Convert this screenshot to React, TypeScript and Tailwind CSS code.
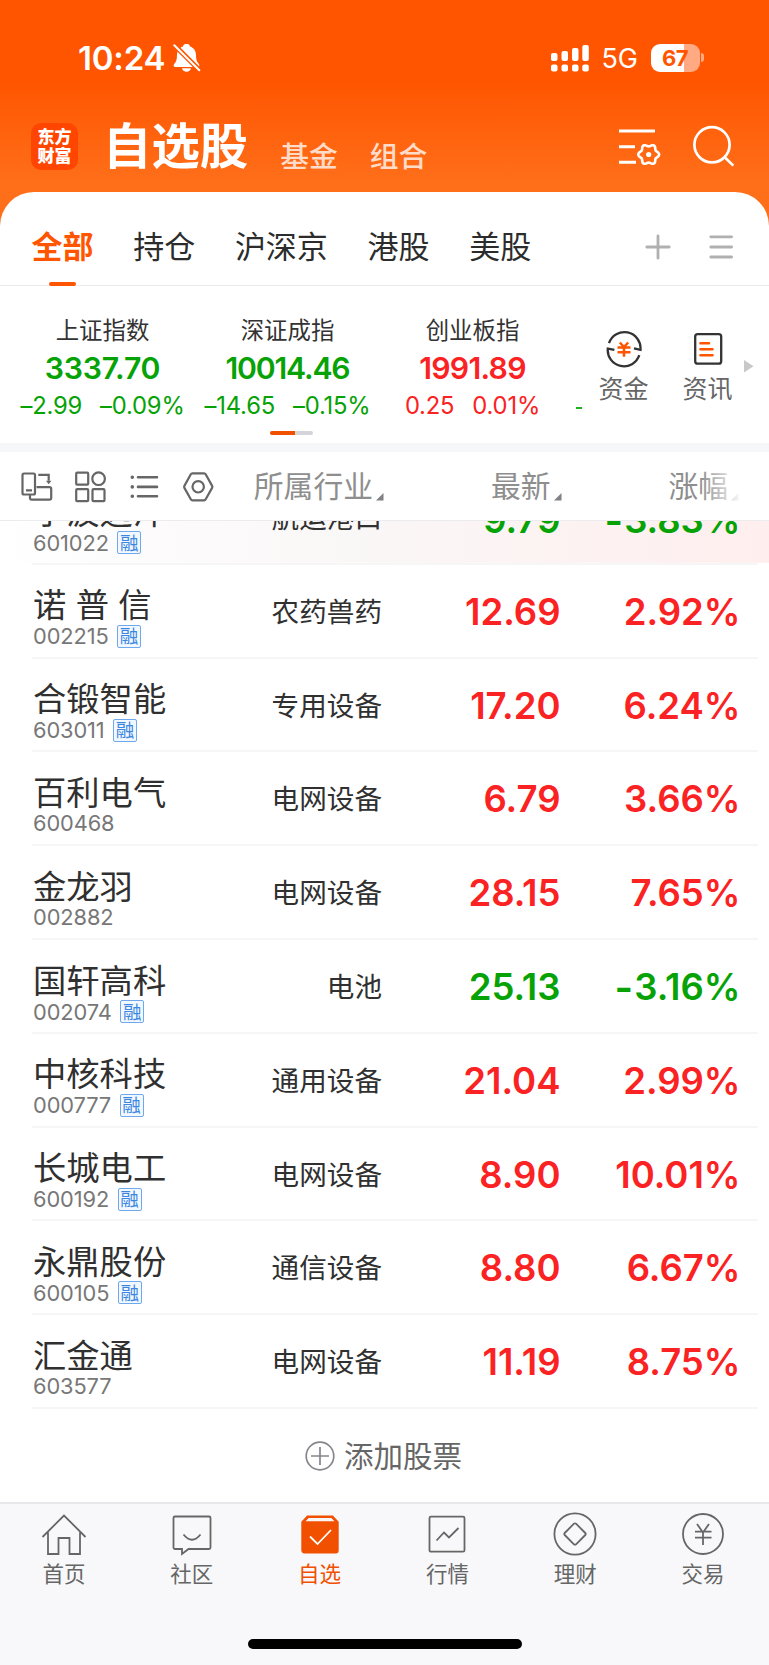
import React from 'react'
import { clsx } from 'clsx'

type Stock = {
  name: string
  code: string
  margin?: boolean
  industry: string
  price: string
  change: string
}

const stocks: Stock[] = [
  { name: '宁波远洋', code: '601022', margin: true, industry: '航运港口', price: '9.79', change: '-3.83%' },
  { name: '诺 普 信', code: '002215', margin: true, industry: '农药兽药', price: '12.69', change: '2.92%' },
  { name: '合锻智能', code: '603011', margin: true, industry: '专用设备', price: '17.20', change: '6.24%' },
  { name: '百利电气', code: '600468', industry: '电网设备', price: '6.79', change: '3.66%' },
  { name: '金龙羽', code: '002882', industry: '电网设备', price: '28.15', change: '7.65%' },
  { name: '国轩高科', code: '002074', margin: true, industry: '电池', price: '25.13', change: '-3.16%' },
  { name: '中核科技', code: '000777', margin: true, industry: '通用设备', price: '21.04', change: '2.99%' },
  { name: '长城电工', code: '600192', margin: true, industry: '电网设备', price: '8.90', change: '10.01%' },
  { name: '永鼎股份', code: '600105', margin: true, industry: '通信设备', price: '8.80', change: '6.67%' },
  { name: '汇金通', code: '603577', industry: '电网设备', price: '11.19', change: '8.75%' },
]

const indices = [
  { name: '上证指数', value: '3337.70', diff: '–2.99', pct: '–0.09%', spacing: 'tracking-[-0.2px]' },
  { name: '深证成指', value: '10014.46', diff: '–14.65', pct: '–0.15%', spacing: 'tracking-[-1.2px]' },
  { name: '创业板指', value: '1991.89', diff: '0.25', pct: '0.01%', up: true, spacing: 'tracking-[-0.7px]' },
]

// six-lobed outline of the small settings gear
const gearPath = (cx: number, cy: number) =>
  Array.from({ length: 72 }, (_, i) => {
    const a = (i / 72) * Math.PI * 2
    const r = 9.2 + 1.2 * Math.cos(6 * a)
    return `${i ? 'L' : 'M'}${(cx + r * Math.cos(a)).toFixed(2)} ${(cy + r * Math.sin(a)).toFixed(2)}`
  }).join('') + 'Z'

const StatusBar = () => {
  return (
    <div className="flex h-[115px] items-center pl-[78px] pr-[65px] text-white">
      <span className="text-[33px] leading-[40px] font-semibold tracking-[-0.2px]">10:24</span>
      <svg className="ml-[8px]" width="28" height="30" viewBox="173 43 28 30" fill="#fff">
        <path d="M186.500 43.800c-1.900 0-3.200 1.200-3.500 2.600-4.200 1.400-6 4.800-6 8.700 0 4.700-.9 6.800-2.600 8.700-1.400 1.600-.8 3.300.9 3.300h22.400c1.700 0 2.300-1.700.9-3.300-1.700-1.900-2.600-4-2.600-8.700 0-3.900-1.800-7.300-6-8.700-.3-1.400-1.600-2.600-3.500-2.600z" />
        <path d="M182 68.200h9c-.4 2.200-2.300 3.600-4.500 3.600s-4.100-1.400-4.500-3.600z" />
        <path d="M173.500 44.200l26.500 26.500" stroke="#ff5500" strokeWidth="5" />
        <path d="M174.300 45.300l25 25" stroke="#fff" strokeWidth="2" strokeLinecap="round" />
      </svg>
      <div className="ml-auto flex items-center">
        <svg width="40" height="28" viewBox="550 43 40 28" fill="#fff">
          <rect x="551" y="52" width="6.500" height="8" rx="2" />
          <rect x="561.500" y="50" width="6.500" height="10" rx="2" />
          <rect x="572" y="47" width="6.500" height="13" rx="2" />
          <rect x="582.300" y="44" width="6.500" height="16" rx="2" />
          <rect x="551" y="63.500" width="6.500" height="7" rx="2" />
          <rect x="561.500" y="63.500" width="6.500" height="7" rx="2" />
          <rect x="572" y="63.500" width="6.500" height="7" rx="2" />
          <rect x="582.300" y="63.500" width="6.500" height="7" rx="2" />
        </svg>
        <span className="ml-[12px] mt-[2px] text-[27px] leading-[32px] tracking-[-0.3px]">5G</span>
        <div className="ml-[13px] flex items-center">
          <div className="flex h-[28px] w-[49px] items-center justify-center rounded-[9px] bg-[linear-gradient(90deg,#fff_67%,#ffaa82_67%)]">
            <span className="text-[22px] leading-[28px] font-bold tracking-[-0.5px] text-[#ff5500]">67</span>
          </div>
          <div className="ml-[1.500px] h-[9px] w-[3px] rounded-r-full bg-[#ffaa82]" />
        </div>
      </div>
    </div>
  )
}

const Header = () => {
  return (
    <div className="flex h-[77px] items-start pl-[31px] text-white">
      <div className="mt-[8px] flex h-[47px] w-[47px] flex-col items-center justify-center rounded-[10px] bg-[#ff4500] text-[17px] leading-[19px] font-black">
        <span>东方</span>
        <span>财富</span>
      </div>
      <h1 className="ml-[25px] mt-[1px] text-[48.400px] leading-[62px] font-bold">自选股</h1>
      <span className="ml-[32px] mt-[21px] text-[28.800px] leading-[42px] font-medium text-[#ffdcc9]">基金</span>
      <span className="ml-[32px] mt-[21px] text-[28.800px] leading-[42px] font-medium text-[#ffdcc9]">组合</span>
      <svg className="ml-auto mt-[11px]" width="44" height="42" viewBox="618 126 44 42" fill="none" stroke="#fff" strokeWidth="3">
        <path d="M619 131h36M619 146.700h16M619 162.300h17" />
        <path d={gearPath(648.7, 154.5)} strokeWidth="2.600" />
        <circle cx="648.700" cy="154.500" r="2.600" fill="#fff" stroke="none" />
      </svg>
      <svg className="ml-[31px] mr-[33px] mt-[9px]" width="43" height="44" viewBox="693 124 43 44" fill="none" stroke="#fff" strokeWidth="2.700">
        <circle cx="712" cy="144.800" r="17.600" />
        <path d="M724.500 157l8.800 8.600" />
      </svg>
    </div>
  )
}

const Tabs = () => {
  return (
    <div className="flex h-[94px] items-center gap-[39.700px] border-b border-[#ececee] pl-[31.500px] text-[31px] leading-[94px] text-[#2c2c2c]">
      <div className="relative mt-[17px] font-bold text-[#ff5500]">
        全部
        <div className="absolute bottom-[8.500px] left-[17.500px] h-[4px] w-[27px] rounded-[2px] bg-[#ff5500]" />
      </div>
      <span className="mt-[17px]">持仓</span>
      <span className="mt-[17px]">沪深京</span>
      <span className="mt-[17px]">港股</span>
      <span className="mt-[17px]">美股</span>
      <div className="ml-auto mt-[16px] mr-[35px] flex items-center gap-[37px]">
        <svg width="26" height="26" viewBox="0 0 26 26" stroke="#b0b0b0" strokeWidth="2.800" strokeLinecap="round">
          <path d="M13 1.800v22.400M1.800 13h22.400" />
        </svg>
        <svg width="26" height="26" viewBox="0 0 26 26" stroke="#b0b0b0" strokeWidth="2.800" strokeLinecap="round">
          <path d="M2.800 2.800h20.800M2.800 13h20.800M2.800 23h20.800" />
        </svg>
      </div>
    </div>
  )
}

const IndexStrip = () => {
  return (
    <div className="flex h-[156.500px] pl-[10px]">
      <div className="flex flex-col">
        <div className="flex">
          {indices.map((item) => (
            <div
              key={item.name}
              className={clsx('flex h-[145px] w-[185px] flex-col items-center pt-[29px] whitespace-nowrap', item.up ? 'text-[#fa2222]' : 'text-[#06a206]')}
            >
              <span className="text-[23.400px] leading-[32px] text-[#333]">{item.name}</span>
              <span className={clsx('mt-[1px] text-[30.200px] leading-[40px] font-semibold', item.spacing)}>{item.value}</span>
              <div className="mt-[2px] flex gap-[18px] text-[23.800px] leading-[32px] tracking-[-0.2px]">
                <span>{item.diff}</span>
                <span>{item.pct}</span>
              </div>
            </div>
          ))}
          <div className="flex w-[14px] justify-end pt-[120px]">
            <div className="mt-[1px] mr-[-3px] h-[2px] w-[6px] bg-[#1fb01f]" />
          </div>
        </div>
        <div className="ml-[260px] flex h-[4px] w-[43px] overflow-hidden rounded-[2px] bg-[#d3d5da]">
          <div className="w-[25px] bg-[#f05000]" />
        </div>
      </div>
      <div className="ml-[20px] flex pt-[44px] text-[25px] leading-[34px] whitespace-nowrap text-[#666]">
        <div className="flex w-[49px] flex-col items-center">
          <svg width="38" height="38" viewBox="605 330 38 38" fill="none" stroke="#333" strokeWidth="2.300">
            <path d="M609 343.200A16.200 16.200 0 0 1 640.500 349.800L634 348.300" />
            <path d="M639.300 355.200A16.200 16.200 0 0 1 607.800 348.500L614.400 349.800" />
            <path d="M619.800 342.500l4.200 4.500 4.200-4.500M617.500 347.600h13M617.500 352.300h13M624 347v9.800" stroke="#ff5500" strokeWidth="2.500" />
          </svg>
          <span className="mt-[4px]">资金</span>
        </div>
        <div className="ml-[35px] flex w-[49px] flex-col items-center">
          <svg width="38" height="38" viewBox="689 330 38 38" fill="none" stroke="#333" strokeWidth="2.300">
            <rect x="695.200" y="334.200" width="26" height="29.500" rx="2.500" />
            <path d="M700.500 343.300h8.500M700.500 349.300h12M700.500 355.300h12" stroke="#ff5500" strokeWidth="2.600" strokeLinecap="round" />
          </svg>
          <span className="mt-[4px]">资讯</span>
        </div>
        <svg className="ml-[12px] mt-[30px]" width="10" height="13" viewBox="0 0 10 13" fill="#c8c8c8">
          <path d="M0 0l9.500 6.300L0 12.600z" />
        </svg>
      </div>
    </div>
  )
}

const SortMark = () => (
  <svg className="mt-[20px] ml-[3px]" width="8" height="8" viewBox="0 0 8 8" fill="#808086">
    <path d="M7.500 0v7.500H0z" />
  </svg>
)

const Toolbar = () => {
  return (
    <div className="relative flex h-[69px] items-center border-b border-[#ececee] pt-[1px] text-[29.800px] leading-[67px] text-[#8e8e8e]">
      <svg className="ml-[20px]" width="195" height="36" viewBox="20 469 195 36" fill="none" stroke="#666" strokeWidth="2.200">
        <rect x="22.500" y="473.500" width="12.500" height="21" rx="1.500" />
        <path d="M26 490.300h6M38.300 474.800h10.400v6" />
        <path d="M46 480.800h5.400l-2.700 3.500z" fill="#666" stroke="none" />
        <path d="M36.500 487.200h13.200a1.500 1.500 0 0 1 1.500 1.500v9.500a1.500 1.500 0 0 1-1.500 1.500H31.500a1.500 1.500 0 0 1-1.500-1.500V495" />
        <rect x="76.200" y="472.700" width="12" height="12" rx="1" />
        <circle cx="98.600" cy="478.700" r="6.300" />
        <rect x="76.200" y="489.200" width="12" height="12" rx="1" />
        <rect x="92.500" y="489.200" width="12" height="12" rx="1" />
        <path d="M138 477.300h19M138 486.900h19M138 496.300h19" strokeWidth="2.600" strokeLinecap="round" />
        <path d="M132.300 477.300h.01M132.300 486.900h.01M132.300 496.300h.01" strokeWidth="3.600" strokeLinecap="round" />
        <path d="M192.500 473.300h11.500a2 2 0 0 1 1.700 1l6.400 11.600a2 2 0 0 1 0 2l-6.400 11.400a2 2 0 0 1-1.700 1h-11.500a2 2 0 0 1-1.700-1l-6.400-11.400a2 2 0 0 1 0-2l6.400-11.600a2 2 0 0 1 1.700-1z" />
        <circle cx="198.200" cy="486.800" r="5.700" />
      </svg>
      <div className="flex w-[169px] items-center justify-end">
        <span>所属行业</span>
        <SortMark />
      </div>
      <div className="flex w-[177.500px] items-center justify-end">
        <span>最新</span>
        <SortMark />
      </div>
      <div className="flex w-[177.500px] items-center justify-end">
        <span>涨幅</span>
        <SortMark />
      </div>
      <div className="absolute top-0 right-0 h-[68px] w-[69px] bg-[linear-gradient(90deg,transparent,#ffffffe8_55%)]" />
    </div>
  )
}

const Change = ({ value }: { value: string }) => {
  if (!value.startsWith('-')) return <>{value}</>
  return (
    <>
      <span className="mr-[1px] align-[-2px] text-[40px] leading-none">-</span>
      {value.slice(1)}
    </>
  )
}

const StockRow = ({ stock, active }: { stock: Stock; active?: boolean }) => {
  return (
    <div className={clsx('h-[93.800px] shrink-0', active && 'bg-[linear-gradient(90deg,#fff_0%,#faf7f7_45%,#ffeeee_100%)] bg-[length:100%_91.800px] bg-no-repeat')}>
      <div className="mr-[11px] ml-[32px] flex h-full border-b-2 border-[#f6f6f7]">
        <div className="w-[170px] pl-[1px] pt-[20.500px]">
          <div className="text-[33.300px] leading-[41px] whitespace-nowrap text-[#303030]">{stock.name}</div>
          <div className="mt-[-1.500px] flex items-center text-[21.800px] leading-[22px] tracking-[-0.1px] text-[#777]">
            <span>{stock.code}</span>
            {stock.margin && (
              <span className="ml-[8.500px] flex h-[23px] w-[24px] items-center justify-center rounded-[2px] border border-[#6fa8ec] bg-[#f2f8ff] text-[18.500px] leading-[22px] tracking-normal text-[#3b86e0]">
                融
              </span>
            )}
          </div>
        </div>
        <div className="w-[180px] text-right text-[27.600px] leading-[95.500px] text-[#303030]">{stock.industry}</div>
        <div
          className={clsx(
            'flex text-right text-[36.500px] font-semibold',
            active ? 'leading-[98px]' : 'leading-[94px]',
            stock.change.startsWith('-') ? 'text-[#06a206]' : 'text-[#fa2222]',
          )}
        >
          <span className="w-[178.500px]">{stock.price}</span>
          <span className="w-[180px]">
            <Change value={stock.change} />
          </span>
        </div>
      </div>
    </div>
  )
}

const navItems = [
  {
    label: '首页',
    icon: <path d="M1.500 24L23 2.500 44.500 24M7 19.500V41H17.500V25H28.500V41H39V19.500" />,
  },
  {
    label: '社区',
    icon: (
      <>
        <path d="M6 3.500H40a1.500 1.500 0 0 1 1.500 1.500V34.500a1.500 1.500 0 0 1-1.500 1.500H19.500L13 41V36H6a1.500 1.500 0 0 1-1.500-1.500V5A1.500 1.500 0 0 1 6 3.500z" />
        <path d="M14.500 21.500Q23 32 31.500 21.500" />
      </>
    ),
  },
  {
    label: '自选',
    active: true,
    icon: (
      <>
        <path d="M10.500 3.500H35.500L40.800 9V37.500a2 2 0 0 1-2 2H7.200a2 2 0 0 1-2-2V9z" fill="#f05000" />
        <path d="M8.500 8.300l3.200-3.300h22.600l3.200 3.300z" fill="#f8f8fa" stroke="none" />
        <path d="M13 23.500l7.500 7.500 13.500-14" stroke="#fff" />
      </>
    ),
  },
  {
    label: '行情',
    icon: (
      <>
        <rect x="5.500" y="3.700" width="35" height="35" rx="1.500" />
        <path d="M12.500 27.500l7.500-8 5 5L34.500 15" />
      </>
    ),
  },
  {
    label: '理财',
    icon: (
      <>
        <circle cx="23" cy="21" r="20.600" />
        <path d="M22 10.700a1.400 1.400 0 0 1 2 0l9.300 9.300a1.400 1.400 0 0 1 0 2L24 31.300a1.400 1.400 0 0 1-2 0L12.700 22a1.400 1.400 0 0 1 0-2z" />
      </>
    ),
  },
  {
    label: '交易',
    icon: (
      <>
        <circle cx="23" cy="21" r="20" />
        <path d="M17 11l6 8.500 6-8.500M15 18.700h16.500M15 24.700h16.500M23 18.500V32" />
      </>
    ),
  },
]

const BottomNav = () => {
  return (
    <nav className="flex h-[163px] flex-col border-t-2 border-[#e8e8ea] bg-[#f8f8fa]">
      <div className="grid grid-cols-6 pt-[8px] pr-[2px]">
        {navItems.map((item) => (
          <div key={item.label} className={clsx('flex flex-col items-center', item.active ? 'text-[#f05000]' : 'text-[#666]')}>
            <svg width="46" height="44" viewBox="0 -1 46 44" fill="none" stroke="currentColor" strokeWidth="1.800">
              {item.icon}
            </svg>
            <span className="mt-[2px] text-[21.500px] leading-[32px]">{item.label}</span>
          </div>
        ))}
      </div>
      <div className="mx-auto mt-auto mb-[16px] h-[10px] w-[274px] rounded-full bg-black" />
    </nav>
  )
}

const App = () => {
  return (
    <div className="flex h-[1665px] w-[769px] flex-col overflow-hidden bg-[linear-gradient(180deg,#ff5500_0px,#ff5500_80px,#ff6f1a_185px)] font-['Inter','Noto_Sans_CJK_SC',sans-serif]">
      <StatusBar />
      <Header />
      <main className="flex flex-1 flex-col rounded-t-[34px] bg-white">
        <Tabs />
        <IndexStrip />
        <div className="h-[9.500px] bg-[#f6f7f9]" />
        <Toolbar />
        <div className="flex h-[888px] flex-col justify-end overflow-hidden">
          {stocks.map((stock, i) => (
            <StockRow key={stock.code} stock={stock} active={i === 0} />
          ))}
        </div>
        <div className="flex flex-1 items-center justify-center gap-[9px] pr-[6px] text-[29.500px] leading-[40px] text-[#666]">
          <svg width="30" height="30" viewBox="0 0 30 30" fill="none" stroke="#85858c" strokeWidth="1.700">
            <circle cx="15" cy="15" r="13.800" />
            <path d="M15 6v18M6 15h18" />
          </svg>
          <span className="mr-[-4px]">添加股票</span>
        </div>
      </main>
      <BottomNav />
    </div>
  )
}

export default App
